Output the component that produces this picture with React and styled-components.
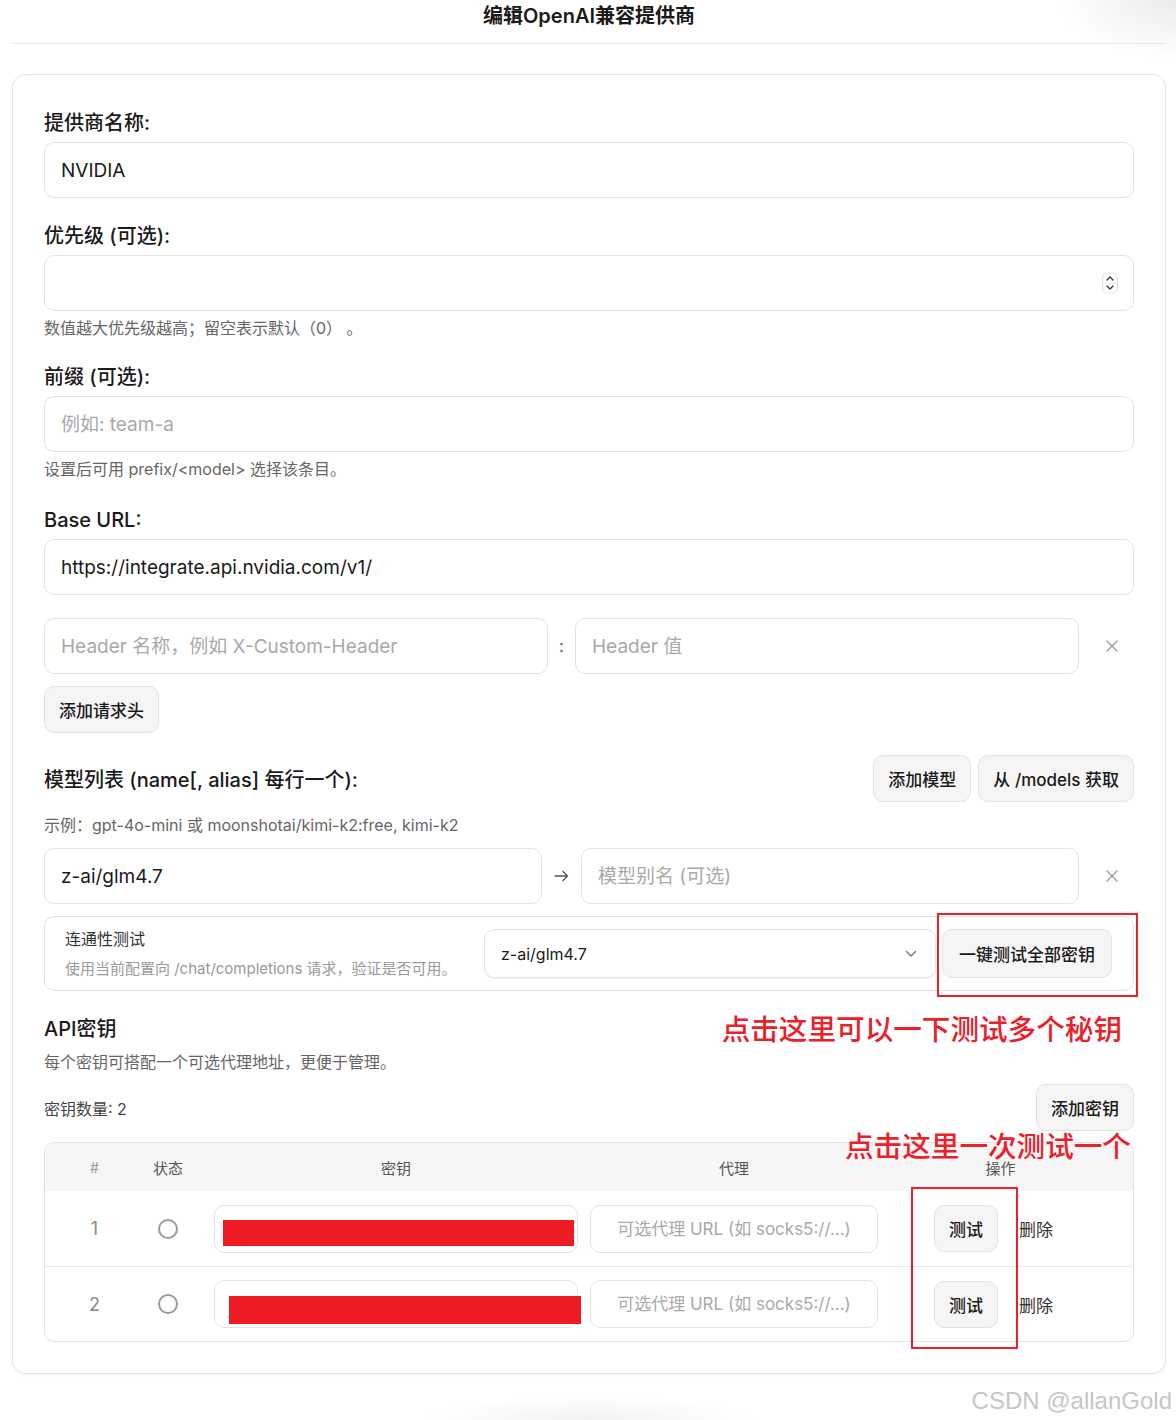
import React from "react";
import styled, { createGlobalStyle } from "styled-components";

const FONT = `Inter, "Noto Sans CJK SC", "Noto Sans", sans-serif`;
const RED = "#e8212b";
const LINE = "#e3e3e3";

const GlobalStyle = createGlobalStyle`
  html, body { margin: 0; padding: 0; }
  body {
    font-family: ${FONT};
    color: #1c1c1c;
    min-height: 1420px;
    background:
      radial-gradient(ellipse 120px 60px at 1176px 0px, rgba(0,0,0,0.08), rgba(0,0,0,0) 100%),
      radial-gradient(ellipse 170px 24px at 590px 1420px, rgba(0,0,0,0.05), rgba(0,0,0,0) 100%),
      #ffffff;
  }
  * { box-sizing: border-box; }
`;

const Page = styled.div`
  width: 1154px;
  margin-left: 12px;
  min-height: 1420px;
`;

const TopBar = styled.header`
  height: 44px;
  border-bottom: 1px solid #e8e8e8;
  display: flex;
  justify-content: center;
`;

const Title = styled.h1`
  margin: 0;
  font-size: 20px;
  font-weight: 600;
  line-height: 32px;
  color: #1a1a1a;
`;

const Card = styled.section`
  margin-top: 30px;
  border: 1px solid #e4e4e4;
  border-radius: 14px;
  padding: 33px 31px 31px;
  box-shadow: 0 1px 3px rgba(0, 0, 0, 0.05);
  background: #fff;
`;

const Field = styled.div`
  margin-bottom: ${(p) => p.$mb ?? 23}px;
`;

const Label = styled.label`
  display: block;
  font-size: 20px;
  font-weight: 500;
  line-height: 26px;
  padding-top: 2px;
  margin-bottom: 6px;
  color: #1a1a1a;
`;

const TextInput = styled.input`
  display: block;
  width: 100%;
  height: ${(p) => p.$h ?? 56}px;
  border: 1px solid ${LINE};
  border-radius: 10px;
  padding: 0 16px;
  font-family: ${FONT};
  font-size: ${(p) => p.$fs ?? 19}px;
  color: #1a1a1a;
  text-align: ${(p) => (p.$center ? "center" : "left")};
  background: #fff;
  outline: none;
  &::placeholder {
    color: #a9a9a9;
  }
`;

const NumberWrap = styled.div`
  position: relative;
`;

const Spinner = styled.span`
  position: absolute;
  right: 16px;
  top: 50%;
  transform: translateY(-50%);
  display: flex;
`;

const Hint = styled.p`
  margin: ${(p) => p.$mt ?? 6}px 0 0;
  font-size: 16px;
  line-height: 22px;
  color: #666;
`;

const PairRow = styled.div`
  display: grid;
  grid-template-columns: 1fr ${(p) => p.$mid}px 1fr 55px;
  align-items: center;
  margin-top: ${(p) => p.$mt ?? 0}px;
`;

const Colon = styled.span`
  text-align: center;
  font-size: 17px;
  color: #666;
`;

const Middle = styled.span`
  display: flex;
  justify-content: center;
`;

const RemoveX = styled.span`
  display: flex;
  padding-left: 27px;
`;

const Button = styled.button`
  height: ${(p) => p.$h ?? 47}px;
  width: ${(p) => (p.$w ? `${p.$w}px` : "auto")};
  padding: 0 14px;
  border: 1px solid ${LINE};
  border-radius: 10px;
  background: #f5f5f5;
  font-family: ${FONT};
  font-size: 17px;
  font-weight: 500;
  color: #1a1a1a;
  white-space: nowrap;
  cursor: pointer;
`;

const Block = styled.div`
  margin-top: ${(p) => p.$mt ?? 0}px;
`;

const SplitRow = styled.div`
  display: flex;
  justify-content: space-between;
  align-items: center;
  margin-top: ${(p) => p.$mt ?? 0}px;
`;

const ButtonGroup = styled.div`
  display: flex;
  gap: 7px;
`;

const SectionLabel = styled.span`
  font-size: 20px;
  font-weight: 500;
  color: #1a1a1a;
`;

const TestBox = styled.div`
  position: relative;
  margin-top: 12px;
  display: flex;
  align-items: center;
  gap: 6px;
  padding: 10px 21px 10px 20px;
  border: 1px solid ${LINE};
  border-radius: 10px;
`;

const TestText = styled.div`
  flex: 1;
`;

const TestTitle = styled.div`
  font-size: 16px;
  line-height: 24px;
  color: #333;
`;

const TestDesc = styled.div`
  margin-top: 7px;
  font-size: 15px;
  line-height: 22px;
  color: #9a9a9a;
`;

const Select = styled.div`
  width: 452px;
  height: 49px;
  display: flex;
  align-items: center;
  justify-content: space-between;
  padding: 0 18px 0 16px;
  border: 1px solid ${LINE};
  border-radius: 10px;
  box-shadow: 0 1px 2px rgba(0, 0, 0, 0.06);
  font-size: 16px;
  color: #1a1a1a;
`;

const MarkBox = styled.div`
  position: absolute;
  left: ${(p) => p.$x}px;
  top: ${(p) => p.$y}px;
  width: ${(p) => p.$w}px;
  height: ${(p) => p.$h}px;
  border: 2px solid ${RED};
  pointer-events: none;
`;

const Note = styled.span`
  font-size: 28.6px;
  font-weight: 500;
  line-height: 36px;
  color: ${RED};
  white-space: nowrap;
`;

const InlineNote = styled(Note)`
  margin-right: 12px;
  transform: translateY(3px);
`;

const FloatingNote = styled(Note)`
  position: absolute;
  left: ${(p) => p.$x}px;
  top: ${(p) => p.$y}px;
`;

const ApiTitle = styled.span`
  font-size: 20px;
  font-weight: 500;
  color: #1a1a1a;
`;

const CountText = styled.span`
  font-size: 16px;
  color: #444;
`;

const Table = styled.div`
  position: relative;
  margin-top: 11px;
  border: 1px solid ${LINE};
  border-radius: 10px;
`;

const COLS = "99px 48px 386px 312px 1fr";

const HeadRow = styled.div`
  display: grid;
  grid-template-columns: ${COLS};
  height: 48px;
  align-items: center;
  background: #f6f6f6;
  border-radius: 9px 9px 0 0;
`;

const HeadCell = styled.div`
  text-align: center;
  font-size: ${(p) => (p.$dim ? 14 : 15)}px;
  color: ${(p) => (p.$dim ? "#999" : "#555")};
  padding: ${(p) => p.$pad ?? "0"};
`;

const BodyRow = styled.div`
  display: grid;
  grid-template-columns: ${COLS};
  height: 75px;
  align-items: center;
  & + & {
    border-top: 1px solid #e8e8e8;
  }
`;

const Cell = styled.div`
  display: flex;
  align-items: center;
  justify-content: ${(p) => (p.$center ? "center" : "flex-start")};
  padding: ${(p) => p.$pad ?? "0"};
`;

const RowNum = styled.span`
  font-size: 18px;
  color: #8a8a8a;
`;

const KeyField = styled.div`
  width: 100%;
  height: 48px;
  border: 1px solid ${LINE};
  border-radius: 10px;
  background: #fff;
`;

const Redacted = styled.div`
  margin: ${(p) => p.$top}px 0 0 ${(p) => p.$left}px;
  width: ${(p) => p.$w}px;
  height: ${(p) => p.$h}px;
  background: #ed1c24;
`;

const DeleteText = styled.span`
  margin-left: 21px;
  font-size: 17px;
  color: #333;
`;

const Watermark = styled.div`
  margin: 13px -6px 0 0;
  text-align: right;
  font-family: "Liberation Sans", Arial, sans-serif;
  font-size: 24px;
  line-height: 28px;
  color: #c6c6c6;
`;

const CloseIcon = () => (
  <svg width="12" height="12" viewBox="0 0 12 12">
    <path d="M1 1L11 11M11 1L1 11" stroke="#9a9a9a" strokeWidth="1.3" strokeLinecap="round" />
  </svg>
);

const ArrowIcon = () => (
  <svg width="15" height="12" viewBox="0 0 15 12">
    <path d="M1 6H13.5M9 1.5L13.5 6L9 10.5" stroke="#555" strokeWidth="1.4" fill="none" strokeLinecap="round" strokeLinejoin="round" />
  </svg>
);

const ChevronDown = () => (
  <svg width="12" height="8" viewBox="0 0 12 8">
    <path d="M1.5 1.5L6 6L10.5 1.5" stroke="#777" strokeWidth="1.4" fill="none" strokeLinecap="round" strokeLinejoin="round" />
  </svg>
);

const SpinIcon = () => (
  <svg width="16" height="21" viewBox="0 0 16 21">
    <rect x="0.5" y="0.5" width="15" height="20" rx="5" fill="#fff" stroke="#dcdcdc" />
    <line x1="1" y1="10.5" x2="15" y2="10.5" stroke="#e6e6e6" />
    <path d="M5 7.5L8 4.5L11 7.5" stroke="#333" strokeWidth="1.3" fill="none" strokeLinecap="round" strokeLinejoin="round" />
    <path d="M5 13.5L8 16.5L11 13.5" stroke="#333" strokeWidth="1.3" fill="none" strokeLinecap="round" strokeLinejoin="round" />
  </svg>
);

const StatusRing = () => (
  <svg width="22" height="22" viewBox="0 0 22 22">
    <circle cx="11" cy="11" r="9" stroke="#9a9a9a" strokeWidth="2" fill="none" />
  </svg>
);

const keys = [
  { id: 1, left: 8, top: 14, w: 351, h: 26 },
  { id: 2, left: 14, top: 15, w: 352, h: 28 },
];

export default function App() {
  return (
    <>
      <GlobalStyle />
      <Page>
        <TopBar>
          <Title>编辑OpenAI兼容提供商</Title>
        </TopBar>

        <Card>
          <Field>
            <Label>提供商名称:</Label>
            <TextInput defaultValue="NVIDIA" />
          </Field>

          <Field>
            <Label>优先级 (可选):</Label>
            <NumberWrap>
              <TextInput />
              <Spinner>
                <SpinIcon />
              </Spinner>
            </NumberWrap>
            <Hint>数值越大优先级越高；留空表示默认（0） 。</Hint>
          </Field>

          <Field $mb={25}>
            <Label>前缀 (可选):</Label>
            <TextInput placeholder="例如: team-a" />
            <Hint>设置后可用 prefix/&lt;model&gt; 选择该条目。</Hint>
          </Field>

          <Field>
            <Label>Base URL:</Label>
            <TextInput defaultValue="https://integrate.api.nvidia.com/v1/" />
          </Field>

          <PairRow $mid={27}>
            <TextInput placeholder="Header 名称，例如 X-Custom-Header" />
            <Colon>:</Colon>
            <TextInput placeholder="Header 值" />
            <RemoveX>
              <CloseIcon />
            </RemoveX>
          </PairRow>

          <Block $mt={12}>
            <Button>添加请求头</Button>
          </Block>

          <SplitRow $mt={22}>
            <SectionLabel>模型列表 (name[, alias] 每行一个):</SectionLabel>
            <ButtonGroup>
              <Button>添加模型</Button>
              <Button>从 /models 获取</Button>
            </ButtonGroup>
          </SplitRow>

          <Hint $mt={12}>示例：gpt-4o-mini 或 moonshotai/kimi-k2:free, kimi-k2</Hint>

          <PairRow $mid={39} $mt={12}>
            <TextInput defaultValue="z-ai/glm4.7" />
            <Middle>
              <ArrowIcon />
            </Middle>
            <TextInput placeholder="模型别名 (可选)" />
            <RemoveX>
              <CloseIcon />
            </RemoveX>
          </PairRow>

          <TestBox>
            <TestText>
              <TestTitle>连通性测试</TestTitle>
              <TestDesc>使用当前配置向 /chat/completions 请求，验证是否可用。</TestDesc>
            </TestText>
            <Select>
              <span>z-ai/glm4.7</span>
              <ChevronDown />
            </Select>
            <Button $h={49} $w={170}>一键测试全部密钥</Button>
            <MarkBox $x={892} $y={-4} $w={201} $h={84} />
          </TestBox>

          <SplitRow $mt={18}>
            <ApiTitle>API密钥</ApiTitle>
            <InlineNote>点击这里可以一下测试多个秘钥</InlineNote>
          </SplitRow>
          <Hint $mt={6}>每个密钥可搭配一个可选代理地址，更便于管理。</Hint>

          <SplitRow $mt={11}>
            <CountText>密钥数量: 2</CountText>
            <Button>添加密钥</Button>
          </SplitRow>

          <Table>
            <HeadRow>
              <HeadCell $dim>#</HeadCell>
              <HeadCell>状态</HeadCell>
              <HeadCell $pad="0 0 0 22px">密钥</HeadCell>
              <HeadCell $pad="0 12px">代理</HeadCell>
              <HeadCell $pad="0 66px 0 44px">操作</HeadCell>
            </HeadRow>

            {keys.map((k) => (
              <BodyRow key={k.id}>
                <Cell $center>
                  <RowNum>{k.id}</RowNum>
                </Cell>
                <Cell $center>
                  <StatusRing />
                </Cell>
                <Cell $pad="0 0 0 22px">
                  <KeyField>
                    <Redacted $left={k.left} $top={k.top} $w={k.w} $h={k.h} />
                  </KeyField>
                </Cell>
                <Cell $pad="0 12px">
                  <TextInput $h={48} $fs={17} $center placeholder="可选代理 URL (如 socks5://...)" />
                </Cell>
                <Cell $pad="0 0 0 44px">
                  <Button>测试</Button>
                  <DeleteText>删除</DeleteText>
                </Cell>
              </BodyRow>
            ))}

            <FloatingNote $x={800} $y={-14}>点击这里一次测试一个</FloatingNote>
            <MarkBox $x={866} $y={44} $w={107} $h={162} />
          </Table>
        </Card>

        <Watermark>CSDN @allanGold</Watermark>
      </Page>
    </>
  );
}
